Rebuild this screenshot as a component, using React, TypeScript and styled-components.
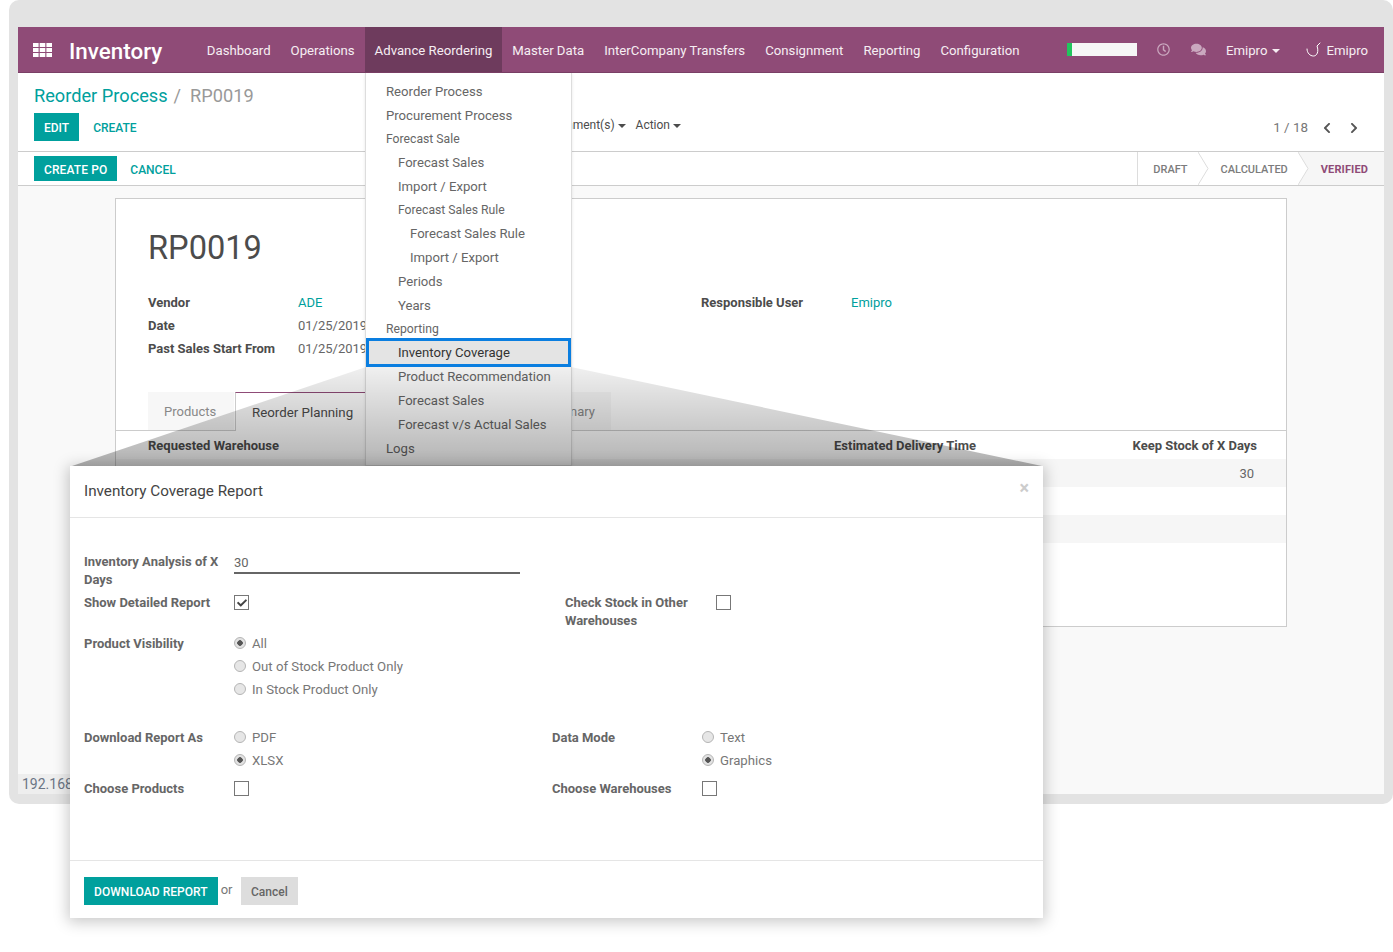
import React from 'react';
import styled, { createGlobalStyle } from 'styled-components';
import { FaCheck, FaChevronLeft, FaChevronRight, FaComments, FaRegClock } from 'react-icons/fa';

const GlobalStyle = createGlobalStyle`
  html, body { margin: 0; padding: 0; background: #fff; }
  body { font-family: Roboto, "Liberation Sans", sans-serif; font-size: 13px; color: #666; }
  * { box-sizing: border-box; }
`;

const Canvas = styled.div`
  position: relative;
  width: 1393px;
  height: 952px;
  overflow: hidden;
  padding-left: 9px;
`;

const Frame = styled.div`
  width: 1384px;
  height: 804px;
  padding: 27px 9px 9px;
  background: #e3e3e3;
  border-radius: 10px;
`;

const Browser = styled.div`
  position: relative;
  height: 767px;
  display: flex;
  flex-direction: column;
  background: #f9f9f9;
`;

const Navbar = styled.nav`
  height: 46px;
  flex: none;
  display: flex;
  align-items: stretch;
  background: #8f4b77;
  border-bottom: 1px solid #7a3f66;
  color: #fff;
  padding-left: 15px;
  padding-right: 16px;
`;

const AppIcon = styled.svg`
  width: 19px;
  height: 14px;
  align-self: center;
  margin-right: 17px;
`;

const Brand = styled.div`
  font-size: 22.4px;
  font-weight: 500;
  line-height: 48px;
  margin-right: 34.6px;
`;

const NavItem = styled.div<{ $active?: boolean }>`
  padding: 0 10px;
  font-size: 13.2px;
  line-height: 48px;
  background: ${p => (p.$active ? '#6e3b5d' : 'transparent')};
  color: #f6eef3;
`;

const NavRight = styled.div`
  margin-left: auto;
  display: flex;
  align-items: center;
  font-size: 13.2px;
  line-height: 18px;
  padding-top: 2px;
  color: #f6eef3;
`;

const Progress = styled.div`
  width: 70px;
  height: 13px;
  margin-top: -2px;
  background: #f6f6f6;
  border-left: 5px solid #22c55e;
  margin-right: 20px;
`;

const FadedIcon = styled.span<{ $gap: number }>`
  display: inline-flex;
  color: #caa8bf;
  margin-top: -2px;
  margin-right: ${p => p.$gap}px;
`;

const Caret = styled.span`
  display: inline-block;
  width: 0;
  height: 0;
  margin-left: 5px;
  border-left: 4px solid transparent;
  border-right: 4px solid transparent;
  border-top: 4px solid currentColor;
  vertical-align: middle;
`;

const TightCaret = styled(Caret)`
  margin-left: 3px;
`;

const UserIcon = styled.svg`
  width: 16px;
  height: 16px;
  margin: -2px 4px 0 26px;
`;

const ControlPanel = styled.div`
  height: 79px;
  flex: none;
  background: #fff;
  border-bottom: 1px solid #ccc;
  padding: 11px 16px 0;
`;

const Breadcrumb = styled.div`
  font-size: 18.2px;
  line-height: 24px;
  color: #999;
`;

const BreadcrumbLink = styled.span`
  color: #00a09d;
  margin-right: 6px;
`;

const BreadcrumbCurrent = styled.span`
  margin-left: 9px;
`;

const ControlRow = styled.div`
  display: flex;
  align-items: center;
  height: 28px;
  margin-top: 5px;
`;

const PrimaryButton = styled.div`
  background: #00a09d;
  color: #fff;
  font-size: 12px;
  font-weight: 500;
  line-height: 30px;
  height: 28px;
  padding: 0 10px;
`;

const StatusButton = styled(PrimaryButton)`
  height: 25px;
  line-height: 28px;
  letter-spacing: 0.1px;
`;

const LinkButton = styled.div<{ $left: number; $top: number }>`
  color: #00a09d;
  font-size: 12px;
  font-weight: 500;
  line-height: 15px;
  padding: ${p => p.$top}px 13px 0 ${p => p.$left}px;
`;

const SidebarMenus = styled.div`
  margin-left: 388px;
  margin-top: -4px;
  display: flex;
  gap: 10px;
  font-size: 12px;
  color: #4c4c4c;
`;

const Pager = styled.div`
  margin-left: auto;
  display: flex;
  align-items: center;
  font-size: 13.4px;
  color: #777;
  padding-top: 1px;
`;

const PagerArrow = styled.span`
  display: inline-flex;
  color: #555;
  margin-left: 13px;
  &:last-child { margin-left: 15px; margin-right: 8px; }
`;

const StatusBar = styled.div`
  height: 34px;
  flex: none;
  display: flex;
  align-items: center;
  background: #fff;
  border-bottom: 1px solid #ccc;
  padding-left: 16px;
`;

const Statuses = styled.div`
  margin-left: auto;
  display: flex;
  align-self: stretch;
  border-left: 1px solid #ddd;
`;

const Status = styled.div<{ $current?: boolean; $left: number; $right: number }>`
  display: flex;
  align-items: center;
  padding: 2px ${p => p.$right}px 0 ${p => p.$left}px;
  font-size: 11px;
  font-weight: ${p => (p.$current ? 700 : 500)};
  letter-spacing: ${p => (p.$current ? 0.12 : 0)}px;
  color: ${p => (p.$current ? '#8f4b77' : '#7c7c7c')};
  background: ${p => (p.$current ? '#f6f6f6' : '#fff')};
`;

const StatusArrow = styled.svg<{ $fill: string }>`
  width: 11px;
  height: 33px;
  flex: none;
  background: ${p => p.$fill};
`;

const SheetArea = styled.div`
  flex: 1;
  padding: 12px 97px 0;
`;

const Sheet = styled.div`
  height: 429px;
  background: #fff;
  border: 1px solid #ccc;
`;

const SheetHead = styled.div`
  padding: 29px 32px 0;
`;

const Title = styled.h1`
  margin: 0;
  font-size: 32.6px;
  font-weight: 400;
  line-height: 40px;
  color: #4c4c4c;
`;

const FieldColumns = styled.div`
  display: flex;
  margin-top: 23px;
`;

const FieldColumn = styled.div<{ $width: number }>`
  width: ${p => p.$width}px;
  display: grid;
  grid-template-columns: 150px 1fr;
  grid-auto-rows: 23px;
  align-items: center;
`;

const FieldLabel = styled.div`
  font-weight: 700;
  font-size: 13px;
  color: #4c4c4c;
`;

const FieldValue = styled.div<{ $link?: boolean }>`
  font-size: 13px;
  color: ${p => (p.$link ? '#00a09d' : '#666')};
  white-space: nowrap;
`;

const Tabs = styled.div`
  display: flex;
  margin-top: 32px;
  padding-left: 32px;
  height: 39px;
  border-bottom: 1px solid #ccc;
`;

const Tab = styled.div<{ $active?: boolean; $width: number }>`
  width: ${p => p.$width}px;
  height: ${p => (p.$active ? 39 : 38)}px;
  padding: 0 16px;
  text-align: ${p => (p.$width > 200 ? 'right' : 'left')};
  line-height: ${p => (p.$active ? 40 : 39)}px;
  font-size: ${p => (p.$active ? 13.3 : 13)}px;
  color: ${p => (p.$active ? '#4c4c4c' : '#888')};
  background: ${p => (p.$active ? '#fff' : '#f7f7f7')};
  border-top: ${p => (p.$active ? '1px solid #8f4b77' : 'none')};
  border-left: ${p => (p.$active ? '1px solid #ccc' : 'none')};
  border-right: ${p => (p.$active ? '1px solid #ccc' : 'none')};
  margin-right: 1px;
  white-space: nowrap;
`;

const TableHead = styled.div`
  height: 28px;
  display: grid;
  grid-template-columns: 686px 1fr auto;
  align-items: center;
  padding: 0 29px 0 32px;
  font-weight: 700;
  color: #4c4c4c;
`;

const DataRow = styled.div<{ $shaded?: boolean }>`
  height: 28px;
  line-height: 30px;
  padding: 0 32px;
  text-align: right;
  background: ${p => (p.$shaded ? '#f6f6f6' : '#fff')};
`;

const UrlTip = styled.div`
  position: absolute;
  left: 0;
  bottom: 0;
  width: 52px;
  height: 20px;
  padding-left: 4px;
  font-size: 14px;
  line-height: 20px;
  background: #eee;
  color: #6b7585;
  white-space: nowrap;
`;

const Menu = styled.div`
  position: absolute;
  left: 365px;
  top: 73px;
  width: 207px;
  height: 393px;
  padding-top: 7px;
  background: #fff;
  border: 1px solid #ddd;
  border-top: none;
  box-shadow: 0 1px 3px rgba(0, 0, 0, 0.1);
`;

const MenuItem = styled.div<{ $level?: number; $small?: boolean; $selected?: boolean }>`
  height: ${p => (p.$small ? 23 : 24)}px;
  line-height: ${p => (p.$small ? 23 : 24)}px;
  padding-left: ${p => 20 + (p.$level || 0) * 12 - (p.$selected ? 3 : 0)}px;
  font-size: ${p => (p.$small ? 12.2 : 13.15)}px;
  color: ${p => (p.$selected ? '#333' : '#666')};
  white-space: nowrap;
  ${p => p.$selected && `
    background: #e4e4e4;
    border: 3px solid #0a7ee0;
    height: 29px;
    line-height: 23px;
    margin: -3px 0 -2px 0;
    position: relative;
  `}
`;

const Callout = styled.svg`
  position: absolute;
  left: 0;
  top: 0;
  pointer-events: none;
`;

const Dialog = styled.div`
  position: absolute;
  left: 70px;
  top: 466px;
  width: 973px;
  height: 452px;
  display: flex;
  flex-direction: column;
  background: #fff;
  box-shadow: 0 2px 14px 2px rgba(0, 0, 0, 0.22);
`;

const DialogHeader = styled.div`
  height: 52px;
  flex: none;
  display: flex;
  justify-content: space-between;
  padding: 15px 14px 0;
  border-bottom: 1px solid #e5e5e5;
`;

const DialogTitle = styled.div`
  font-size: 15.25px;
  line-height: 20px;
  color: #444;
`;

const CloseMark = styled.div`
  font-size: 18px;
  font-weight: 700;
  line-height: 14px;
  color: #ccc;
`;

const DialogBody = styled.div`
  flex: 1;
  padding: 35px 14px 0;
`;

const TopForm = styled.div`
  display: grid;
  grid-template-columns: 150px 331px 151px 1fr;
`;

const BottomForm = styled.div<{ $top: number }>`
  display: grid;
  grid-template-columns: 150px 318px 150px 1fr;
  margin-top: ${p => p.$top}px;
`;

const Label = styled.div<{ $width?: number; $after?: number }>`
  font-size: 13px;
  font-weight: 700;
  line-height: 18px;
  color: #666;
  ${p => p.$width && `width: ${p.$width}px;`}
  margin-bottom: ${p => p.$after || 0}px;
`;

const NumberField = styled.div`
  width: 286px;
  height: 21px;
  padding-top: 1px;
  font-size: 13px;
  line-height: 18px;
  color: #666;
  border-bottom: 2px solid #666;
`;

const Check = styled.div`
  width: 15px;
  height: 15px;
  border: 1px solid #777;
  display: flex;
  align-items: center;
  justify-content: center;
  color: #444;
  background: #fff;
  margin-top: 1px;
`;

const RadioGroup = styled.div`
  display: flex;
  flex-direction: column;
  gap: 5px;
  margin: -1px 0 1px;
`;

const RadioRow = styled.div`
  display: flex;
  align-items: center;
  height: 18px;
  gap: 6px;
  font-size: 13.2px;
  color: #777;
`;

const RadioDot = styled.span<{ $on?: boolean }>`
  width: 12px;
  height: 12px;
  border-radius: 50%;
  border: 1px solid #b5b5b5;
  background: ${p => (p.$on ? 'radial-gradient(circle, #555 0 2.5px, #e2e2e2 3px)' : '#e6e6e6')};
`;

const DialogFooter = styled.div`
  height: 58px;
  flex: none;
  display: flex;
  align-items: flex-start;
  padding: 16px 14px 0;
  border-top: 1px solid #e5e5e5;
`;

const DownloadButton = styled.div`
  height: 28px;
  padding: 0 10px;
  line-height: 30px;
  font-size: 12px;
  font-weight: 500;
  letter-spacing: 0.05px;
  color: #fff;
  background: #00a09d;
`;

const OrText = styled.span`
  margin: 6px 8px 0 3px;
  line-height: 14px;
  color: #777;
`;

const CancelButton = styled.div`
  height: 28px;
  padding: 0 10.5px;
  line-height: 30px;
  font-size: 12px;
  font-weight: 500;
  color: #666;
  background: #ddd;
`;

const menu: { text: string; level?: number; small?: boolean; selected?: boolean }[] = [
  { text: 'Reorder Process' },
  { text: 'Procurement Process' },
  { text: 'Forecast Sale', small: true },
  { text: 'Forecast Sales', level: 1 },
  { text: 'Import / Export', level: 1 },
  { text: 'Forecast Sales Rule', level: 1, small: true },
  { text: 'Forecast Sales Rule', level: 2 },
  { text: 'Import / Export', level: 2 },
  { text: 'Periods', level: 1 },
  { text: 'Years', level: 1 },
  { text: 'Reporting', small: true },
  { text: 'Inventory Coverage', level: 1, selected: true },
  { text: 'Product Recommendation', level: 1 },
  { text: 'Forecast Sales', level: 1 },
  { text: 'Forecast v/s Actual Sales', level: 1 },
  { text: 'Logs' }
];

const navItems = ['Dashboard', 'Operations', 'Advance Reordering', 'Master Data', 'InterCompany Transfers', 'Consignment', 'Reporting', 'Configuration'];

const Radio: React.FC<{ label: string; on?: boolean }> = ({ label, on }) => (
  <RadioRow>
    <RadioDot $on={on} />
    {label}
  </RadioRow>
);

export default function App() {
  return (
    <Canvas>
      <GlobalStyle />
      <Frame>
        <Browser>
          <Navbar>
            <AppIcon viewBox="0 0 19 14">
              {[0, 1, 2].map(r =>
                [0, 1, 2].map(c => <rect key={`${r}${c}`} x={c * 6.7} y={r * 5} width="5.6" height="4" fill="#fff" />)
              )}
            </AppIcon>
            <Brand>Inventory</Brand>
            {navItems.map(item => (
              <NavItem key={item} $active={item === 'Advance Reordering'}>{item}</NavItem>
            ))}
            <NavRight>
              <Progress />
              <FadedIcon $gap={21}><FaRegClock size={13} /></FadedIcon>
              <FadedIcon $gap={20}><FaComments size={15} /></FadedIcon>
              Emipro<Caret />
              <UserIcon viewBox="0 0 16 16">
                <path d="M1 7c0 4 3 7 6.500 7S13 9.500 11 4L14 1" fill="none" stroke="#fff" strokeWidth="1" strokeLinecap="round" strokeLinejoin="round" />
              </UserIcon>
              Emipro
            </NavRight>
          </Navbar>
          <ControlPanel>
            <Breadcrumb>
              <BreadcrumbLink>Reorder Process</BreadcrumbLink>/<BreadcrumbCurrent>RP0019</BreadcrumbCurrent>
            </Breadcrumb>
            <ControlRow>
              <PrimaryButton>EDIT</PrimaryButton>
              <LinkButton $left={14} $top={2}>CREATE</LinkButton>
              <SidebarMenus>
                <span>Attachment(s)<TightCaret /></span>
                <span>Action<TightCaret /></span>
              </SidebarMenus>
              <Pager>
                1 / 18
                <PagerArrow><FaChevronLeft size={12} /></PagerArrow>
                <PagerArrow><FaChevronRight size={12} /></PagerArrow>
              </Pager>
            </ControlRow>
          </ControlPanel>
          <StatusBar>
            <StatusButton>CREATE PO</StatusButton>
            <LinkButton $left={13} $top={4}>CANCEL</LinkButton>
            <Statuses>
              <Status $left={15} $right={10}>DRAFT</Status>
              <StatusArrow $fill="#fff" viewBox="0 0 11 33"><path d="M0 0 10 16.500 0 33" fill="none" stroke="#ddd" /></StatusArrow>
              <Status $left={12} $right={10}>CALCULATED</Status>
              <StatusArrow $fill="#f6f6f6" viewBox="0 0 11 33"><path d="M0 0 10 16.500 0 33" fill="#fff" stroke="#ddd" /></StatusArrow>
              <Status $current $left={12} $right={16}>VERIFIED</Status>
            </Statuses>
          </StatusBar>
          <SheetArea>
            <Sheet>
              <SheetHead>
                <Title>RP0019</Title>
                <FieldColumns>
                  <FieldColumn $width={553}>
                    <FieldLabel>Vendor</FieldLabel>
                    <FieldValue $link>ADE</FieldValue>
                    <FieldLabel>Date</FieldLabel>
                    <FieldValue>01/25/2019</FieldValue>
                    <FieldLabel>Past Sales Start From</FieldLabel>
                    <FieldValue>01/25/2019</FieldValue>
                  </FieldColumn>
                  <FieldColumn $width={400}>
                    <FieldLabel>Responsible User</FieldLabel>
                    <FieldValue $link>Emipro</FieldValue>
                  </FieldColumn>
                </FieldColumns>
              </SheetHead>
              <Tabs>
                <Tab $width={86}>Products</Tab>
                <Tab $active $width={134}>Reorder Planning</Tab>
                <Tab $width={241}>Summary</Tab>
              </Tabs>
              <TableHead>
                <span>Requested Warehouse</span>
                <span>Estimated Delivery Time</span>
                <span>Keep Stock of X Days</span>
              </TableHead>
              <DataRow $shaded>30</DataRow>
              <DataRow />
              <DataRow $shaded />
            </Sheet>
          </SheetArea>
          <UrlTip>192.168</UrlTip>
        </Browser>
      </Frame>
      <Menu>
        {menu.map((m, i) => (
          <MenuItem key={i} $level={m.level} $small={m.small} $selected={m.selected}>{m.text}</MenuItem>
        ))}
      </Menu>
      <Callout width="1393" height="952" viewBox="0 0 1393 952">
        <defs>
          <linearGradient id="beam" x1="0" y1="367" x2="0" y2="466" gradientUnits="userSpaceOnUse">
            <stop offset="0" stopColor="#000" stopOpacity="0.06" />
            <stop offset="1" stopColor="#000" stopOpacity="0.3" />
          </linearGradient>
        </defs>
        <polygon points="366,367 571,367 1042,466 72,466" fill="url(#beam)" />
      </Callout>
      <Dialog>
        <DialogHeader>
          <DialogTitle>Inventory Coverage Report</DialogTitle>
          <CloseMark>×</CloseMark>
        </DialogHeader>
        <DialogBody>
          <TopForm>
            <Label $width={140} $after={5}>Inventory Analysis of X Days</Label>
            <NumberField>30</NumberField>
            <span />
            <span />
            <Label>Show Detailed Report</Label>
            <Check><FaCheck size={10} /></Check>
            <Label $width={135} $after={5}>Check Stock in Other Warehouses</Label>
            <Check />
            <Label>Product Visibility</Label>
            <RadioGroup>
              <Radio label="All" on />
              <Radio label="Out of Stock Product Only" />
              <Radio label="In Stock Product Only" />
            </RadioGroup>
          </TopForm>
          <BottomForm $top={30}>
            <Label>Download Report As</Label>
            <RadioGroup>
              <Radio label="PDF" />
              <Radio label="XLSX" on />
            </RadioGroup>
            <Label>Data Mode</Label>
            <RadioGroup>
              <Radio label="Text" />
              <Radio label="Graphics" on />
            </RadioGroup>
          </BottomForm>
          <BottomForm $top={10}>
            <Label>Choose Products</Label>
            <Check />
            <Label>Choose Warehouses</Label>
            <Check />
          </BottomForm>
        </DialogBody>
        <DialogFooter>
          <DownloadButton>DOWNLOAD REPORT</DownloadButton>
          <OrText>or</OrText>
          <CancelButton>Cancel</CancelButton>
        </DialogFooter>
      </Dialog>
    </Canvas>
  );
}
